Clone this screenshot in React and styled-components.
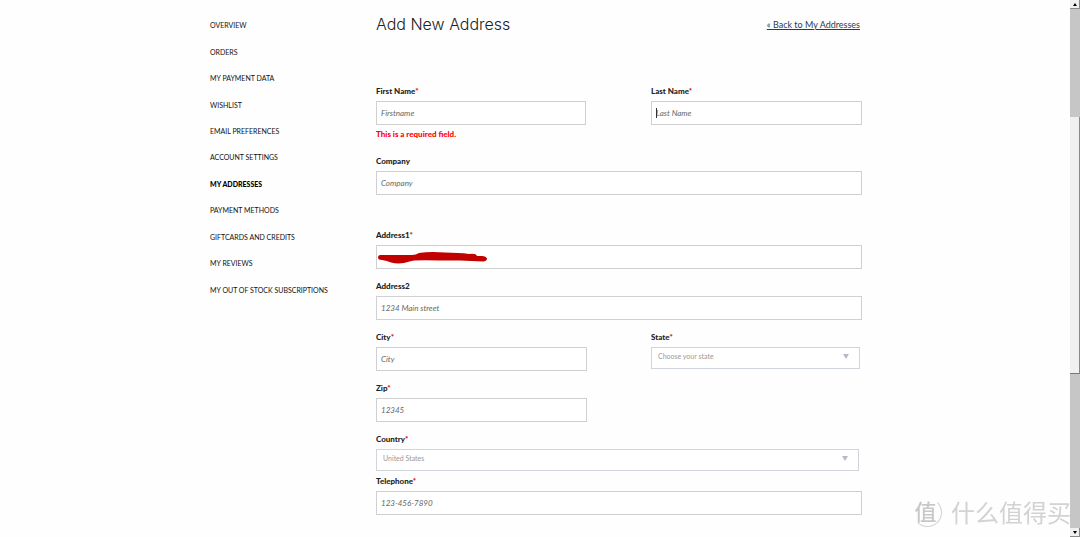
import * as React from 'react';
import styled, { createGlobalStyle, css } from 'styled-components';

const GlobalStyle = createGlobalStyle`
  * {
    box-sizing: border-box;
  }

  body {
    margin: 0;
    color: #222;
    background: #fefefe;
    font-family: Lato, 'Liberation Sans', sans-serif;
    font-size: 8px;
  }
`;

const StyledPage = styled.div`
  display: flex;
  min-height: 100vh;
`;

const StyledContent = styled.div`
  display: flex;
  flex: 1;
  max-width: 654px;
  margin: 0 auto;
  padding: 12px 0 20px 2px;
`;

const StyledNav = styled.nav`
  flex: 0 0 166px;

  ul {
    display: grid;
    grid-auto-rows: 1fr;
    height: 291px;
    margin: 0;
    padding: 0;
    list-style: none;
  }

  li {
    display: flex;
    align-items: center;
  }
`;

const StyledNavLink = styled.a`
  font-size: 7px;
  line-height: 12px;
  text-transform: uppercase;
  text-decoration: none;
  white-space: nowrap;
  color: #111;

  ${({ $active }) =>
    $active &&
    css`
      font-weight: 900;
      color: #000;
    `}
`;

const StyledMain = styled.main`
  flex: 1;
  min-width: 0;
`;

const StyledHeader = styled.header`
  display: flex;
  align-items: center;
  justify-content: space-between;
  height: 24px;
  margin-bottom: 45px;
  padding-right: 2px;

  h1 {
    margin: 0;
    font-family: Inter, sans-serif;
    font-size: 16px;
    font-weight: 300;
    line-height: 24px;
    color: #222;
  }

  a {
    font-size: 9px;
    color: #2c3a50;
    text-decoration: underline;
  }
`;

const StyledForm = styled.form`
  display: grid;
  grid-template-columns: 211px 211px;
  justify-content: space-between;
  row-gap: 7px;
`;

const StyledField = styled.div`
  grid-column: ${({ $wide }) => ($wide ? '1 / -1' : 'auto')};
  margin-bottom: ${({ $space }) => $space || 0}px;

  label {
    display: block;
    font-size: 8px;
    font-weight: 900;
    line-height: 20px;
    color: #222;
  }

  label span {
    color: #e00;
  }
`;

const StyledControl = styled.div`
  position: relative;
  margin-right: ${({ $inset }) => $inset || 0}px;
`;

const StyledInput = styled.input`
  display: block;
  width: 100%;
  height: 24px;
  padding: 0 4px;
  border: 1px solid #d0d0d0;
  border-radius: 0;
  outline: none;
  background: #fff;
  font-family: inherit;
  font-size: 8px;

  &::placeholder {
    color: #666;
    font-style: italic;
    opacity: 1;
  }
`;

const StyledSelect = styled.select`
  display: block;
  width: 100%;
  height: 22px;
  padding: 0 24px 4px 6px;
  border: 1px solid #d0d5dc;
  border-radius: 0;
  appearance: none;
  background: #fff;
  font-family: inherit;
  font-size: 7px;
  color: #999;
`;

const StyledArrow = styled.svg`
  position: absolute;
  top: 7px;
  right: 11px;
  width: 6px;
  height: 5px;
  fill: #b4bcc8;
  pointer-events: none;
`;

const StyledCaret = styled.span`
  position: absolute;
  top: 7px;
  left: 5px;
  width: 1px;
  height: 10px;
  background: #333;
`;

const StyledScribble = styled.svg`
  position: absolute;
  top: 6px;
  left: 1px;
  width: 112px;
  height: 14px;
`;

const StyledError = styled.p`
  margin: 0;
  font-size: 8px;
  font-weight: 900;
  line-height: 19px;
  color: #f00;
`;

const StyledScrollbar = styled.div`
  display: flex;
  flex: 0 0 10px;
  flex-direction: column;
  background: #c6c6c6;

  button {
    display: flex;
    align-items: center;
    justify-content: center;
    height: 9px;
    padding: 0;
    border: 0;
    border-right: 1px solid #888;
    border-bottom: 1px solid #888;
    background: #f0f0f0;
  }

  svg {
    width: 4px;
    height: 3px;
  }
`;

const StyledTrack = styled.div`
  display: grid;
  flex: 1;
  grid-template-rows: 108fr 257fr 154fr;
`;

const StyledThumb = styled.div`
  grid-row: 2;
  border-right: 1px solid #888;
  border-bottom: 1px solid #777;
  background: #f0f0f0;
`;

const StyledWatermark = styled.div`
  position: fixed;
  right: 9px;
  bottom: 9px;
  display: flex;
  align-items: center;
  gap: 9px;
  font-family: 'Noto Sans CJK SC', sans-serif;
  font-size: 24px;
  line-height: 32px;
  color: #d2d2d2;
  pointer-events: none;
`;

const StyledSeal = styled.span`
  display: flex;
  align-items: center;
  justify-content: center;
  width: 29px;
  height: 29px;
  padding: 0 4px 4px 0;
  border: 1px solid transparent;
  border-right-color: #d2d2d2;
  border-bottom-color: #d2d2d2;
  border-radius: 50%;
  font-size: 22px;
  font-weight: 500;
  color: #c8c8c8;
`;

const links = [
  'Overview',
  'Orders',
  'My payment data',
  'Wishlist',
  'Email preferences',
  'Account settings',
  'My addresses',
  'Payment methods',
  'Giftcards and credits',
  'My reviews',
  'My out of stock subscriptions',
];

const Field = ({ id, label, required, wide, space, inset, error, children }) => (
  <StyledField $wide={wide} $space={space}>
    <label htmlFor={id}>
      {label}
      {required && <span>*</span>}
    </label>
    <StyledControl $inset={inset}>{children}</StyledControl>
    {error && <StyledError>{error}</StyledError>}
  </StyledField>
);

const Select = ({ id, option }) => (
  <>
    <StyledSelect id={id}>
      <option>{option}</option>
    </StyledSelect>
    <StyledArrow viewBox="0 0 6 5">
      <path d="M0 0h6L3 5z" />
    </StyledArrow>
  </>
);

const App = () => {
  return (
    <StyledPage>
      <GlobalStyle />
      <StyledContent>
        <StyledNav>
          <ul>
            {links.map((link) => (
              <li key={link}>
                <StyledNavLink href="/#" $active={link === 'My addresses'}>
                  {link}
                </StyledNavLink>
              </li>
            ))}
          </ul>
        </StyledNav>
        <StyledMain>
          <StyledHeader>
            <h1>Add New Address</h1>
            <a href="/#">« Back to My Addresses</a>
          </StyledHeader>
          <StyledForm>
            <Field id="firstname" label="First Name" required inset={1} error="This is a required field.">
              <StyledInput id="firstname" placeholder="Firstname" />
            </Field>
            <Field id="lastname" label="Last Name" required>
              <StyledInput id="lastname" placeholder="Last Name" />
              <StyledCaret />
            </Field>
            <Field id="company" label="Company" wide space={23}>
              <StyledInput id="company" placeholder="Company" />
            </Field>
            <Field id="address1" label="Address1" required wide>
              <StyledInput id="address1" />
              <StyledScribble viewBox="0 0 112 14">
                <path
                  fill="#c20000"
                  d="M3 4Q1 4 1 6.500Q1 9 5 9Q10 9.500 14 11.500Q20 13 27 12Q33 10 37 9.500Q46 9 62 9.500L83 9.500L106 10.500Q110 10 110 7.500Q109 5 105 5L100 5Q99 2 92 3Q82 1.500 68 1.500Q52 0.500 42 2Q39 4 35 4Z"
                />
              </StyledScribble>
            </Field>
            <Field id="address2" label="Address2" wide>
              <StyledInput id="address2" placeholder="1234 Main street" />
            </Field>
            <Field id="city" label="City" required>
              <StyledInput id="city" placeholder="City" />
            </Field>
            <Field id="state" label="State" required inset={2}>
              <Select id="state" option="Choose your state" />
            </Field>
            <Field id="zip" label="Zip" required>
              <StyledInput id="zip" placeholder="12345" />
            </Field>
            <Field id="country" label="Country" required wide space={-7} inset={3}>
              <Select id="country" option="United States" />
            </Field>
            <Field id="telephone" label="Telephone" required wide>
              <StyledInput id="telephone" type="tel" placeholder="123-456-7890" />
            </Field>
          </StyledForm>
        </StyledMain>
      </StyledContent>
      <StyledScrollbar>
        <button type="button" aria-label="Scroll up">
          <svg viewBox="0 0 4 3">
            <path d="M2 0l2 3H0z" />
          </svg>
        </button>
        <StyledTrack>
          <StyledThumb />
        </StyledTrack>
        <button type="button" aria-label="Scroll down">
          <svg viewBox="0 0 4 3">
            <path d="M0 0h4L2 3z" />
          </svg>
        </button>
      </StyledScrollbar>
      <StyledWatermark>
        <StyledSeal>值</StyledSeal>
        什么值得买
      </StyledWatermark>
    </StyledPage>
  );
};

export default App;
